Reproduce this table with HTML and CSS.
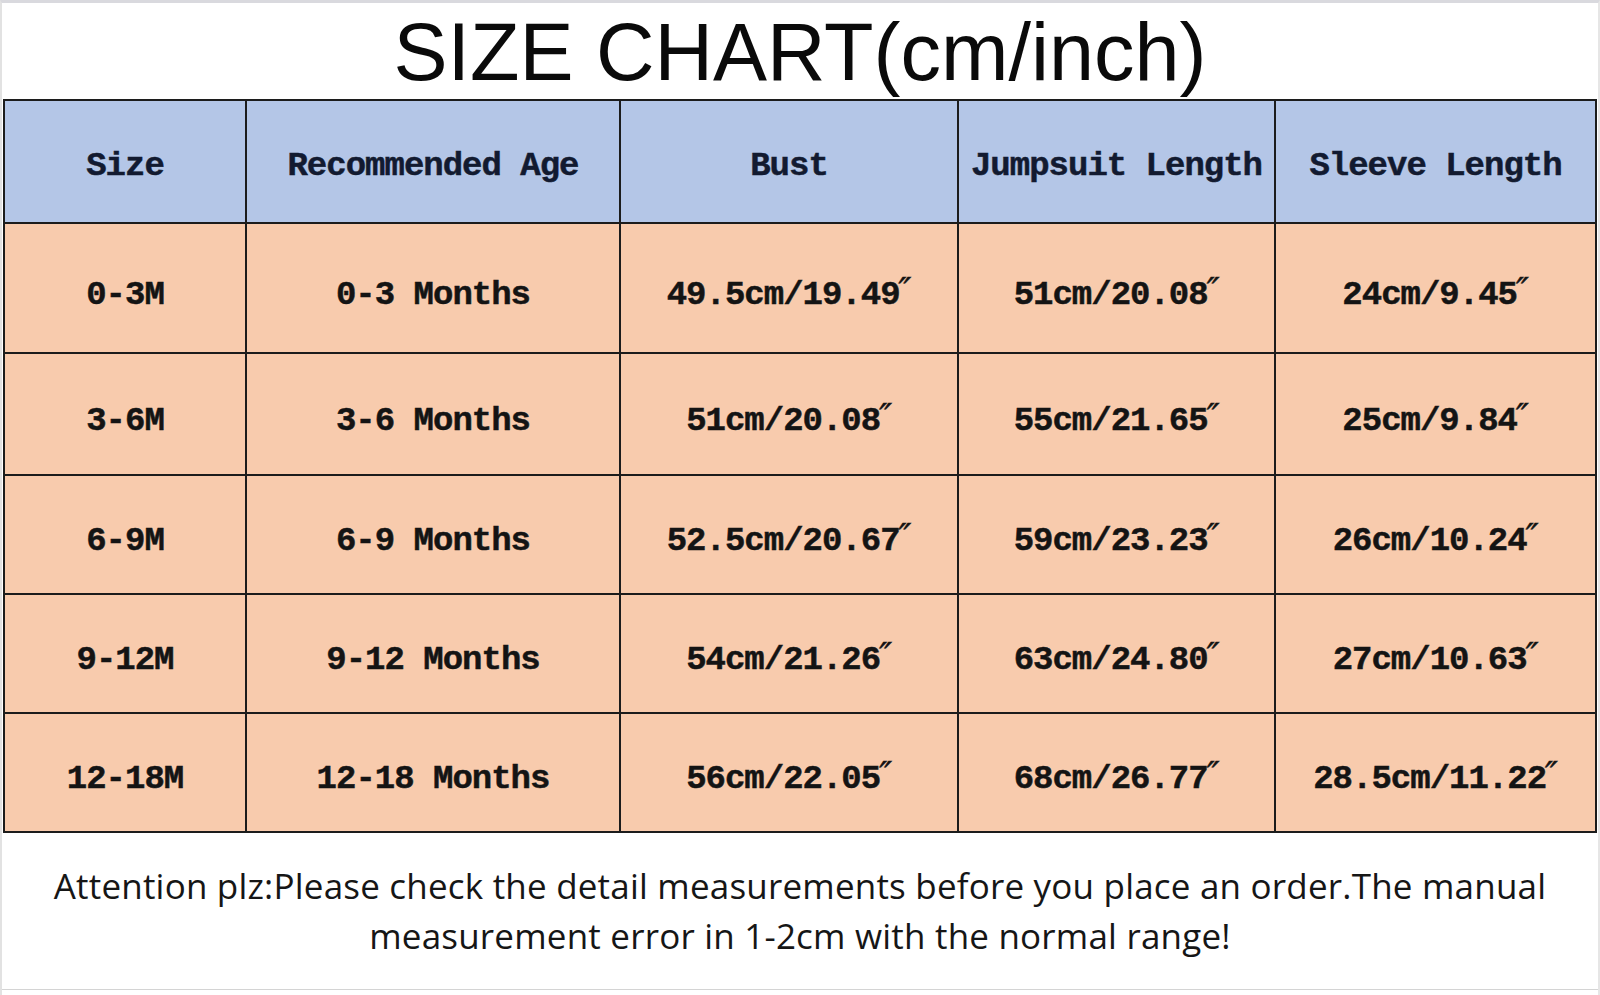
FILE: index.html
```html
<!DOCTYPE html>
<html lang="en">
<head>
<meta charset="utf-8">
<title>Size Chart</title>
<link rel="stylesheet" href="styles.css">
</head>
<body>
<div class="sheet">
  <h1 class="title">SIZE CHART(cm/inch)</h1>
  <table class="chart">
    <colgroup>
      <col class="c1"><col class="c2"><col class="c3"><col class="c4"><col class="c5">
    </colgroup>
    <thead>
      <tr class="head">
        <th>Size</th><th>Recommended Age</th><th>Bust</th><th>Jumpsuit Length</th><th>Sleeve Length</th>
      </tr>
    </thead>
    <tbody>
      <tr class="r1"><td>0-3M</td><td>0-3 Months</td><td>49.5cm/19.49<span class="in">″</span></td><td>51cm/20.08<span class="in">″</span></td><td>24cm/9.45<span class="in">″</span></td></tr>
      <tr class="r2"><td>3-6M</td><td>3-6 Months</td><td>51cm/20.08<span class="in">″</span></td><td>55cm/21.65<span class="in">″</span></td><td>25cm/9.84<span class="in">″</span></td></tr>
      <tr class="r3"><td>6-9M</td><td>6-9 Months</td><td>52.5cm/20.67<span class="in">″</span></td><td>59cm/23.23<span class="in">″</span></td><td>26cm/10.24<span class="in">″</span></td></tr>
      <tr class="r3"><td>9-12M</td><td>9-12 Months</td><td>54cm/21.26<span class="in">″</span></td><td>63cm/24.80<span class="in">″</span></td><td>27cm/10.63<span class="in">″</span></td></tr>
      <tr class="r3"><td>12-18M</td><td>12-18 Months</td><td>56cm/22.05<span class="in">″</span></td><td>68cm/26.77<span class="in">″</span></td><td>28.5cm/11.22<span class="in">″</span></td></tr>
    </tbody>
  </table>
  <p class="note">Attention plz:Please check the detail measurements before you place an order.The manual<br>measurement error in 1-2cm with the normal range!</p>
</div>
</body>
</html>
```

FILE: styles.css
```css
html, body {
  margin: 0;
  padding: 0;
  background: #ffffff;
}

.sheet {
  width: 1600px;
  height: 995px;
  box-sizing: border-box;
  border-top: 3px solid #d9d9de;
  border-left: 2px solid #e2e2e2;
  border-right: 2px solid #e6e6e6;
  background: #ffffff;
  overflow: hidden;
}

.title {
  margin: 0;
  height: 96px;
  font-family: "Liberation Sans", Arial, sans-serif;
  font-weight: normal;
  font-size: 81px;
  line-height: 99px;
  color: #0a0a0a;
  text-align: center;
  letter-spacing: 0;
}

.chart {
  margin-left: 1px;
  width: 1592px;
  border-collapse: collapse;
  table-layout: fixed;
  font-family: "Liberation Mono", "Courier New", monospace;
  font-weight: bold;
  font-size: 34px;
  line-height: 40px;
  letter-spacing: -1px;
  -webkit-text-stroke: 0.5px currentColor;
}

.c1 { width: 242px; }
.c2 { width: 374px; }
.c3 { width: 338px; }
.c4 { width: 317px; }
.c5 { width: 321px; }

.chart th,
.chart td {
  border: 2px solid #1c1c1c;
  padding: 0;
  text-align: center;
  vertical-align: middle;
  white-space: nowrap;
  overflow: hidden;
}

.chart th {
  background: #b4c6e7;
  color: #121a30;
  font-weight: bold;
  padding-top: 9px;
}

.chart td {
  background: #f8cbad;
  color: #141414;
  padding-top: 13px;
}

.in {
  font-family: "DejaVu Serif", serif;
  font-style: italic;
  font-weight: normal;
  font-size: 34px;
  line-height: 0;
  letter-spacing: 0;
  vertical-align: 2px;
  margin-left: -1px;
}

.head { height: 123px; }
.r1 { height: 130px; }
.r2 { height: 122px; }
.r3 { height: 119px; }

.note {
  margin: 0;
  height: 157px;
  box-sizing: border-box;
  padding-top: 28px;
  border-bottom: 1px solid #d4d4d4;
  font-family: "Open Sans", "Noto Sans", sans-serif;
  font-size: 35px;
  line-height: 50px;
  color: #161616;
  text-align: center;
  letter-spacing: 0.2px;
}
```
